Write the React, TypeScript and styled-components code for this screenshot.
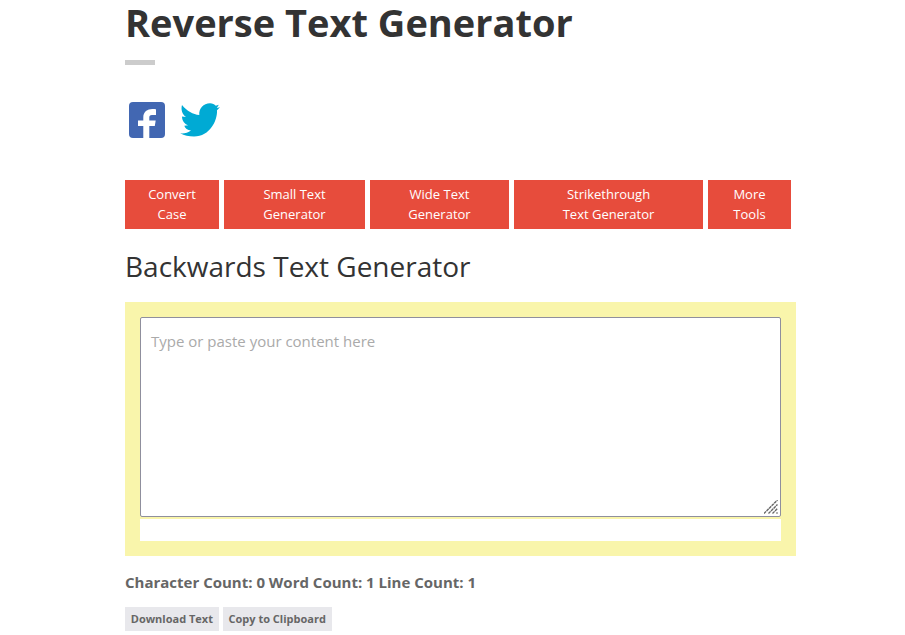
import React from "react";
import styled, { createGlobalStyle } from "styled-components";

const Global = createGlobalStyle`
  html, body { margin: 0; padding: 0; background: #fff; overflow: hidden; }
  body { font-family: "Open Sans", "Liberation Sans", sans-serif; color: #333; }
`;

const Page = styled.main`
  width: 671px;
  margin-left: 125px;
  height: 635px;
  overflow: hidden;
`;

const Title = styled.h1`
  margin: 0;
  font-size: 38px;
  line-height: 44px;
  font-weight: 700;
  color: #333;
`;

const Rule = styled.div`
  width: 30px;
  height: 5px;
  margin-top: 16px;
  background: #ccc;
`;

const Social = styled.div`
  display: flex;
  align-items: center;
  height: 36px;
  margin: 37px 0 42px 4px;
  gap: 15px;
`;

const Icon = styled.svg<{ $w: number; $h: number }>`
  display: block;
  flex: none;
  width: ${(p) => p.$w}px;
  height: ${(p) => p.$h}px;
`;

const Nav = styled.nav`
  display: flex;
  gap: 5px;
`;

const NavLink = styled.a<{ $w: number }>`
  width: ${(p) => p.$w}px;
  height: 49px;
  box-sizing: border-box;
  padding: 4px 0 0;
  background: #e74c3c;
  color: #fff;
  font-size: 13px;
  line-height: 20px;
  text-align: center;
  white-space: pre-line;
`;

const Heading = styled.h2`
  margin: 18px 0 17px;
  font-size: 28px;
  line-height: 38px;
  font-weight: 400;
  color: #333;
`;

const Panel = styled.section`
  background: #f9f5ab;
  padding: 15px;
`;

const Field = styled.div`
  position: relative;
  width: 641px;
  height: 200px;
`;

const Input = styled.textarea`
  display: block;
  box-sizing: border-box;
  width: 100%;
  height: 100%;
  margin: 0;
  padding: 9px 10px;
  border: 1px solid #8f8f9d;
  border-radius: 2px;
  background: #fff;
  outline: none;
  resize: none;
  font-family: inherit;
  font-size: 15px;
  line-height: 28px;
  color: #333;
  &::placeholder { color: #aaa; opacity: 1; }
`;

const Grip = styled.svg`
  position: absolute;
  right: 3px;
  bottom: 3px;
  width: 14px;
  height: 14px;
  pointer-events: none;
`;

const Strip = styled.div`
  height: 22px;
  margin-top: 2px;
  background: #fff;
`;

const Counts = styled.p`
  margin: 16px 0 15px;
  font-size: 15px;
  line-height: 20px;
  font-weight: 700;
  color: #666;
`;

const Actions = styled.div`
  display: flex;
  gap: 4px;
`;

const Action = styled.button`
  height: 24px;
  padding: 0 5.75px 2px;
  border: 0;
  background: #e8e8ec;
  color: #666;
  font-family: inherit;
  font-size: 11px;
  font-weight: 700;
`;

const links = [
  ["Convert\nCase", 94],
  ["Small Text\nGenerator", 141],
  ["Wide Text\nGenerator", 139],
  ["Strikethrough\nText Generator", 189],
  ["More\nTools", 83],
] as const;

export default function App() {
  return (
    <Page>
      <Global />
      <Title>Reverse Text Generator</Title>
      <Rule />
      <Social>
        <Icon $w={36} $h={36} viewBox="0 0 36 36" aria-label="Facebook">
          <rect width="36" height="36" rx="4" fill="#4267b2" />
          <path
            fill="#fff"
            d="M20.3 36V24h5.5l.9-5.4h-6.4v-3c0-1.6.5-2.6 2.7-2.6H27V7.2C26.4 7.1 25 7 23.3 7c-4.9 0-9 2.8-9 8.2v3.4H9V24h5.3v12z"
          />
        </Icon>
        <Icon $w={40} $h={35} viewBox="0 0 40 35" aria-label="Twitter">
          <path
            fill="#00aad4"
            d="M2 2C7 8 13 11.500 19.300 12 18.600 6 23.500.3 30 .3c2.500 0 4.500 1 5.800 2.500l3-1-2 3.200 3.200-.8-3 3C37.600 17 30 33.500 14 33.500c-5 0-10-1-13.700-3.200 3.700.4 7.700-.5 10.700-2.800-3.500-.2-6-2.300-6.700-4.700l3.900-.5C4.500 21 2 17.500 2 13.500l4 .5C2.500 11.500.6 7 2 2z"
          />
        </Icon>
      </Social>
      <Nav>
        {links.map(([label, w]) => (
          <NavLink key={label} $w={w}>{label}</NavLink>
        ))}
      </Nav>
      <Heading>Backwards Text Generator</Heading>
      <Panel>
        <Field>
          <Input placeholder="Type or paste your content here" />
          <Grip viewBox="0 0 14 14">
            <g stroke="#666" strokeWidth="1.4" strokeDasharray="3 0.6" fill="none">
              <path d="M0 13.500 13.500 0" />
              <path d="M4.500 13.500 13.500 4.500" />
              <path d="M8.500 13.500 13.500 8.500" />
              <path d="M12.500 13.500 13.500 12.500" />
            </g>
          </Grip>
        </Field>
        <Strip />
      </Panel>
      <Counts>Character Count: 0 Word Count: 1 Line Count: 1</Counts>
      <Actions>
        <Action>Download Text</Action>
        <Action>Copy to Clipboard</Action>
      </Actions>
    </Page>
  );
}
